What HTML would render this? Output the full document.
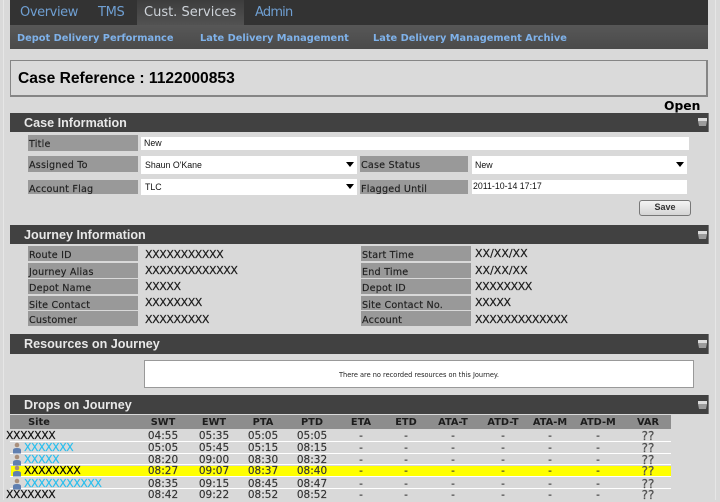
<!DOCTYPE html>
<html><head><meta charset="utf-8"><style>
html,body{margin:0;padding:0}
body{width:720px;height:500px;overflow:hidden;background:#d9d9d9;position:relative;font-family:"DejaVu Sans",sans-serif;color:#222}
div,span,a{position:absolute;white-space:nowrap}
#p{left:0;top:0;width:720px;height:500px;filter:blur(.25px)}
.edge{background:#e6e6e6;top:0;bottom:0;width:1px}
.nav{left:10px;top:0;width:698px;height:25px;background:#333}
.tab{top:1px;height:24px;font:13px/23px "DejaVu Sans",sans-serif;color:#6f9fd2}
.sub{left:10px;top:25px;width:698px;height:24px;background:linear-gradient(#575757,#4a4a4a)}
.sl{top:33px;font:bold 9.8px/11px "DejaVu Sans",sans-serif;color:#7fb2ea}
.case{left:10px;top:60px;width:695px;height:34px;border:2px solid #858585;border-width:1px 2px 2px 1px;background:#dadada;font:bold 15.6px/35px "Liberation Sans",sans-serif;color:#000;text-indent:7px}
.h{left:10px;width:698px;background:#414141;color:#e8e8e8;font:bold 12.6px/20px "Liberation Sans",sans-serif;text-indent:14px;border-right:1px solid #777}
.ci{left:698px;width:10px;height:9px}
.l{background:#999;color:#1f1f1f;font:9.6px/20px "DejaVu Sans",sans-serif;letter-spacing:.2px;text-indent:1px;overflow:hidden;-webkit-text-stroke:.15px #1f1f1f}
.w{background:#fff;font:8.8px/13px "Liberation Sans","DejaVu Sans",sans-serif;color:#111}
.w i{position:absolute;right:3px;top:6px;width:0;height:0;border:4px solid transparent;border-top:5px solid #000;border-bottom:0}
.v{font:11px/13px "DejaVu Sans",sans-serif;color:#1c1c1c;letter-spacing:-.42px;-webkit-text-stroke:.2px #1c1c1c}
.save{left:639px;top:200px;width:50px;height:14px;border:1px solid #777;border-radius:3px;background:linear-gradient(#f4f4f4,#d4d4d4);font:bold 9px/13px "Liberation Sans",sans-serif;color:#333;text-align:center}
.msg{left:144px;top:360px;width:548px;height:26px;background:#fff;border:1px solid #999;text-align:center;font:6.6px/29px "DejaVu Sans",sans-serif;color:#222}
.hd{left:10px;top:415px;width:661px;height:14px;background:#8d8d8d}
.bar{left:10px;width:661px;height:1px;background:#fff}
.r{left:0;width:720px;height:12px;font:10.5px/12px "DejaVu Sans",sans-serif;color:#333;-webkit-text-stroke:.15px #333}
.r span,.hd2 span{top:0;width:50px;text-align:center}
.hd2{left:0;top:417px;width:720px;height:13px;font:bold 9.8px/12px "DejaVu Sans",sans-serif;color:#1c1c1c}
.c1{left:138px}.c2{left:189px}.c3{left:238px}.c4{left:287px}.c5{left:336px}.c6{left:381px}.c7{left:428px}.c8{left:478px}.c9{left:525px}.c10{left:573px}.c11{left:623px;font-size:12px;color:#555}
.r .s{width:auto;text-align:left;font-size:10.8px;color:#111;letter-spacing:-.35px;-webkit-text-stroke:.2px #111}
.r .b{color:#29bfee;-webkit-text-stroke:.2px #29bfee}
.r svg{position:absolute;left:12px;top:0}
.y{left:11px;top:466px;width:660px;height:10px;background:#ff0}
</style></head><body><div id="p">
<div class="edge" style="left:3px"></div>
<div class="edge" style="left:715px"></div>
<div class="nav"></div>
<div style="left:137px;top:0;width:107px;height:25px;background:linear-gradient(#3d3d3d,#525252)"></div>
<span class="tab" style="left:20px;letter-spacing:-.4px">Overview</span>
<span class="tab" style="left:98px;letter-spacing:-.3px">TMS</span>
<span class="tab" style="left:144px;color:#cfd4da">Cust. Services</span>
<span class="tab" style="left:255px;letter-spacing:-.8px">Admin</span>
<div class="sub"></div>
<a class="sl" style="left:17px">Depot Delivery Performance</a>
<a class="sl" style="left:200px">Late Delivery Management</a>
<a class="sl" style="left:373px">Late Delivery Management Archive</a>
<div class="case">Case Reference : 1122000853</div>
<span style="left:664px;top:99px;font:bold 12.3px/15px 'DejaVu Sans',sans-serif;color:#000">Open</span>

<div class="h" style="top:113px;height:19px;line-height:20px">Case Information</div>
<svg class="ci" style="position:absolute;top:118px" viewBox="0 0 10 9"><path d="M0 0H9V3L8 8H1L0 3Z" fill="#9c9c9c"/><path d="M0 0H9V3H0Z" fill="#dcdcdc"/></svg>
<div class="l" style="left:28px;top:135px;width:110px;height:16px">Title</div>
<div class="w" style="left:141px;top:137px;width:548px;height:13px;text-indent:3px">New</div>
<div class="l" style="left:28px;top:156px;width:110px;height:16px">Assigned To</div>
<div class="w" style="left:141px;top:156px;width:216px;height:18px;line-height:19px;text-indent:4px">Shaun O'Kane<i></i></div>
<div class="l" style="left:360px;top:156px;width:108px;height:16px">Case Status</div>
<div class="w" style="left:472px;top:156px;width:215px;height:18px;line-height:19px;text-indent:3px">New<i></i></div>
<div class="l" style="left:28px;top:180px;width:110px;height:14px">Account Flag</div>
<div class="w" style="left:141px;top:179px;width:216px;height:16px;line-height:17px;text-indent:4px">TLC<i style="top:5px"></i></div>
<div class="l" style="left:360px;top:180px;width:108px;height:14px">Flagged Until</div>
<div class="w" style="left:472px;top:180px;width:215px;height:14px;text-indent:1px">2011-10-14 17:17</div>
<div class="save">Save</div>

<div class="h" style="top:225px;height:19px;line-height:20px">Journey Information</div>
<svg class="ci" style="position:absolute;top:231px" viewBox="0 0 10 9"><path d="M0 0H9V3L8 8H1L0 3Z" fill="#9c9c9c"/><path d="M0 0H9V3H0Z" fill="#dcdcdc"/></svg>
<div class="l" style="left:28px;top:246px;width:110px;height:15px">Route ID</div>
<div class="l" style="left:28px;top:263px;width:110px;height:15px">Journey Alias</div>
<div class="l" style="left:28px;top:279px;width:110px;height:15px">Depot Name</div>
<div class="l" style="left:28px;top:296px;width:110px;height:14px">Site Contact</div>
<div class="l" style="left:28px;top:311px;width:110px;height:15px;line-height:19px">Customer</div>
<div class="l" style="left:361px;top:246px;width:110px;height:15px">Start Time</div>
<div class="l" style="left:361px;top:263px;width:110px;height:15px">End Time</div>
<div class="l" style="left:361px;top:279px;width:110px;height:15px">Depot ID</div>
<div class="l" style="left:361px;top:296px;width:110px;height:14px">Site Contact No.</div>
<div class="l" style="left:361px;top:311px;width:110px;height:15px;line-height:19px">Account</div>
<span class="v" style="left:145px;top:248px">XXXXXXXXXXX</span>
<span class="v" style="left:145px;top:264px">XXXXXXXXXXXXX</span>
<span class="v" style="left:145px;top:280px">XXXXX</span>
<span class="v" style="left:145px;top:296px">XXXXXXXX</span>
<span class="v" style="left:145px;top:313px">XXXXXXXXX</span>
<span class="v" style="left:475px;top:247px;letter-spacing:0">XX/XX/XX</span>
<span class="v" style="left:475px;top:264px;letter-spacing:0">XX/XX/XX</span>
<span class="v" style="left:475px;top:280px">XXXXXXXX</span>
<span class="v" style="left:475px;top:296px">XXXXX</span>
<span class="v" style="left:475px;top:313px">XXXXXXXXXXXXX</span>

<div class="h" style="top:334px;height:20px">Resources on Journey</div>
<svg class="ci" style="position:absolute;top:340px" viewBox="0 0 10 9"><path d="M0 0H9V3L8 8H1L0 3Z" fill="#9c9c9c"/><path d="M0 0H9V3H0Z" fill="#dcdcdc"/></svg>
<div class="msg">There are no recorded resources on this Journey.</div>

<div class="h" style="top:395px;height:19px;line-height:20px">Drops on Journey</div>
<svg class="ci" style="position:absolute;top:401px" viewBox="0 0 10 9"><path d="M0 0H9V3L8 8H1L0 3Z" fill="#9c9c9c"/><path d="M0 0H9V3H0Z" fill="#dcdcdc"/></svg>
<div class="hd"></div>
<div class="hd2"><span style="left:14px;width:50px">Site</span><span class="c1">SWT</span><span class="c2">EWT</span><span class="c3">PTA</span><span class="c4">PTD</span><span class="c5">ETA</span><span class="c6">ETD</span><span class="c7">ATA-T</span><span class="c8">ATD-T</span><span class="c9">ATA-M</span><span class="c10">ATD-M</span><span style="left:623px">VAR</span></div>
<div class="y"></div>
<div class="bar" style="top:441px"></div><div class="bar" style="top:453px"></div><div class="bar" style="top:464px"></div><div class="bar" style="top:476px"></div><div class="bar" style="top:488px"></div>

<div class="r" style="top:430px"><span class="s" style="left:6px">XXXXXXX</span><span class="c1">04:55</span><span class="c2">05:35</span><span class="c3">05:05</span><span class="c4">05:05</span><span class="c5">-</span><span class="c6">-</span><span class="c7">-</span><span class="c8">-</span><span class="c9">-</span><span class="c10">-</span><span class="c11">??</span></div>
<div class="r" style="top:442px"><svg width="10" height="12" viewBox="0 0 10 12"><circle cx="5" cy="3" r="2.3" fill="#a98f7c"/><path d="M1 11.500V8Q1 6 5 6T9 8V11.500Z" fill="#5f7fb0"/></svg><span class="s b" style="left:24px">XXXXXXX</span><span class="c1">05:05</span><span class="c2">05:45</span><span class="c3">05:15</span><span class="c4">08:15</span><span class="c5">-</span><span class="c6">-</span><span class="c7">-</span><span class="c8">-</span><span class="c9">-</span><span class="c10">-</span><span class="c11">??</span></div>
<div class="r" style="top:454px"><svg width="10" height="12" viewBox="0 0 10 12"><circle cx="5" cy="3" r="2.3" fill="#a98f7c"/><path d="M1 11.500V8Q1 6 5 6T9 8V11.500Z" fill="#5f7fb0"/></svg><span class="s b" style="left:24px">XXXXX</span><span class="c1">08:20</span><span class="c2">09:00</span><span class="c3">08:30</span><span class="c4">08:32</span><span class="c5">-</span><span class="c6">-</span><span class="c7">-</span><span class="c8">-</span><span class="c9">-</span><span class="c10">-</span><span class="c11">??</span></div>
<div class="r" style="top:465px"><svg width="10" height="12" viewBox="0 0 10 12"><circle cx="5" cy="3" r="2.3" fill="#a98f7c"/><path d="M1 11.500V8Q1 6 5 6T9 8V11.500Z" fill="#5f7fb0"/></svg><span class="s" style="left:24px;color:#000">XXXXXXXX</span><span class="c1">08:27</span><span class="c2">09:07</span><span class="c3">08:37</span><span class="c4">08:40</span><span class="c5">-</span><span class="c6">-</span><span class="c7">-</span><span class="c8">-</span><span class="c9">-</span><span class="c10">-</span><span class="c11">??</span></div>
<div class="r" style="top:478px"><svg width="10" height="12" viewBox="0 0 10 12"><circle cx="5" cy="3" r="2.3" fill="#a98f7c"/><path d="M1 11.500V8Q1 6 5 6T9 8V11.500Z" fill="#5f7fb0"/></svg><span class="s b" style="left:24px">XXXXXXXXXXX</span><span class="c1">08:35</span><span class="c2">09:15</span><span class="c3">08:45</span><span class="c4">08:47</span><span class="c5">-</span><span class="c6">-</span><span class="c7">-</span><span class="c8">-</span><span class="c9">-</span><span class="c10">-</span><span class="c11">??</span></div>
<div class="r" style="top:489px"><span class="s" style="left:6px">XXXXXXX</span><span class="c1">08:42</span><span class="c2">09:22</span><span class="c3">08:52</span><span class="c4">08:52</span><span class="c5">-</span><span class="c6">-</span><span class="c7">-</span><span class="c8">-</span><span class="c9">-</span><span class="c10">-</span><span class="c11">??</span></div>
</div></body></html>
